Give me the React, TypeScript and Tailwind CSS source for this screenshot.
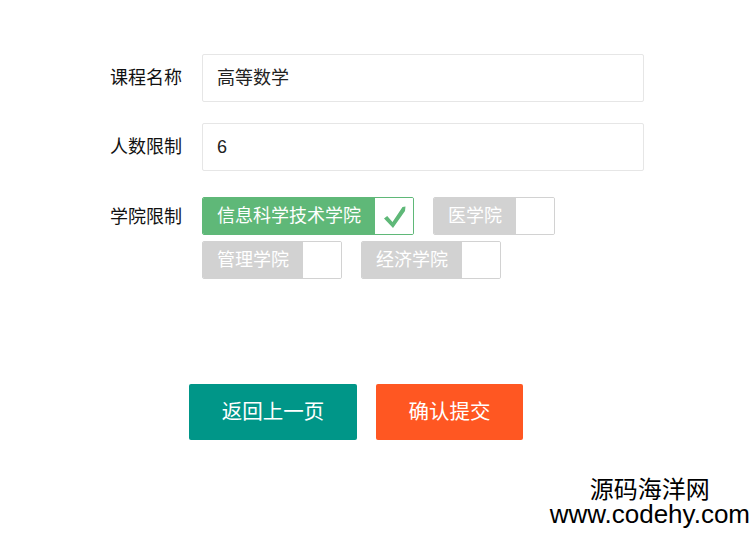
const font = { fontFamily: '"Liberation Sans", "Noto Sans CJK SC", sans-serif' };

const colleges = [
    { name: "信息科学技术学院", checked: true },
    { name: "医学院", checked: false },
    { name: "管理学院", checked: false },
    { name: "经济学院", checked: false },
];

// layui-style check glyph, thick at the top end
const CheckMark = () => (
    <svg width="22" height="23" viewBox="0 0 22 23" className="mt-[2px] ml-[2px]">
        <path d="M0 12.5 L3.2 10 L8.5 16 L18.5 1 L21.5 0.5 L21 5 L9 22 Z" fill="#5FB878" />
    </svg>
);

const Checkbox = ({ name, checked }: { name: string; checked: boolean }) => (
    <div
        className={
            checked
                ? "flex h-[38px] rounded-[2px] border border-[#5FB878] overflow-hidden"
                : "flex h-[38px] rounded-[2px] border border-[#d2d2d2] overflow-hidden"
        }
    >
        <span
            className={
                checked
                    ? "flex items-center px-[14px] bg-[#5FB878] text-white text-[18px]"
                    : "flex items-center px-[14px] bg-[#d2d2d2] text-white text-[18px]"
            }
        >
            {name}
        </span>
        <span className="flex w-[38px] items-center justify-center bg-white">
            {checked && <CheckMark />}
        </span>
    </div>
);

export default function App() {
    return (
        <div className="relative h-[533px] w-[753px] bg-white text-[#222]" style={font}>
            <div className="flex flex-col pt-[54px] pl-[110px]">
                <div className="flex items-center">
                    <label className="w-[92px] text-[18px] text-[#111]">课程名称</label>
                    <div className="flex h-[48px] w-[442px] items-center rounded-[2px] border border-[#e6e6e6] pl-[14px] text-[18px]">
                        高等数学
                    </div>
                </div>
                <div className="mt-[21px] flex items-center">
                    <label className="w-[92px] text-[18px] text-[#111]">人数限制</label>
                    <div className="flex h-[48px] w-[442px] items-center rounded-[2px] border border-[#e6e6e6] pl-[14px] text-[18px]">
                        6
                    </div>
                </div>
                <div className="mt-[26px] flex items-start">
                    <label className="w-[92px] pt-[7px] text-[18px] text-[#111]">学院限制</label>
                    <div className="flex w-[380px] flex-wrap gap-x-[19px] gap-y-[6px]">
                        {colleges.map((c, i) => (
                            <Checkbox name={c.name} checked={c.checked} key={i} />
                        ))}
                    </div>
                </div>
            </div>

            <div className="mt-[105px] flex gap-[19px] pl-[189px]">
                <button className="h-[56px] w-[168px] rounded-[2px] bg-[#009688] text-[20.5px] text-white">
                    返回上一页
                </button>
                <button className="h-[56px] w-[147px] rounded-[2px] bg-[#FF5722] text-[20.5px] text-white">
                    确认提交
                </button>
            </div>

            <div className="absolute right-[3px] top-[478px] flex flex-col items-center text-black">
                <span className="text-[24px] leading-[24px]">源码海洋网</span>
                <span className="text-[26px] leading-[24px]">www.codehy.com</span>
            </div>
        </div>
    );
}
